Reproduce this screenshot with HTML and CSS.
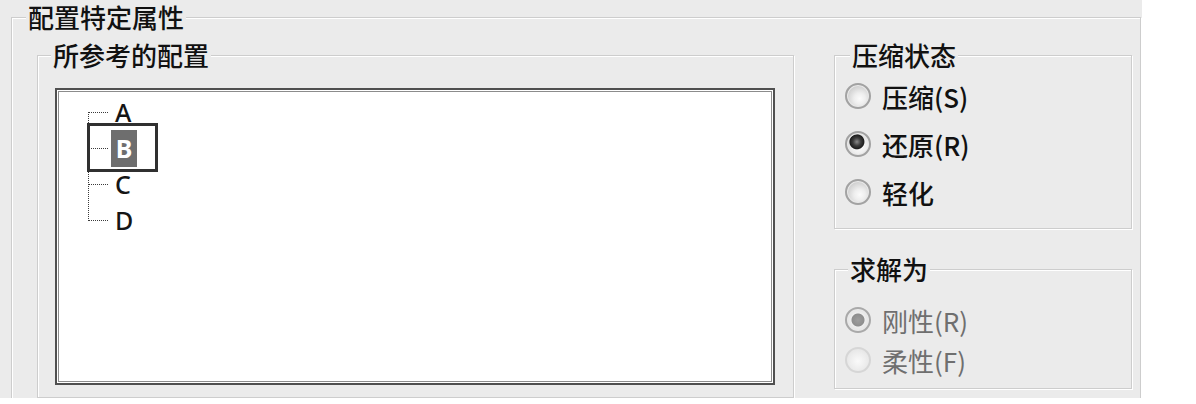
FILE: index.html
```html
<!DOCTYPE html>
<html lang="zh-CN">
<head>
<meta charset="utf-8">
<title>配置特定属性</title>
<link rel="stylesheet" href="styles.css">
</head>
<body>
<div class="window">
  <fieldset class="group outer">
    <legend class="title outer-title">配置特定属性</legend>
    <div class="outer-body">
      <fieldset class="group refs">
        <legend class="title refs-title">所参考的配置</legend>
        <div class="refs-body">
          <div class="listbox">
            <ul class="tree">
              <li class="node"><span class="branch"></span><span class="label">A</span></li>
              <li class="node selected"><span class="branch"></span><span class="label">B</span></li>
              <li class="node"><span class="branch"></span><span class="label">C</span></li>
              <li class="node"><span class="branch"></span><span class="label">D</span></li>
            </ul>
          </div>
        </div>
      </fieldset>
      <div class="side">
        <fieldset class="group state">
          <legend class="title state-title">压缩状态</legend>
          <div class="radios state-radios">
            <div class="radio"><span class="dot"></span><span>压缩(S)</span></div>
            <div class="radio"><span class="dot checked"></span><span>还原(R)</span></div>
            <div class="radio"><span class="dot"></span><span>轻化</span></div>
          </div>
        </fieldset>
        <fieldset class="group solve">
          <legend class="title solve-title">求解为</legend>
          <div class="radios solve-radios">
            <div class="radio disabled"><span class="dot checked"></span><span>刚性(R)</span></div>
            <div class="radio disabled"><span class="dot"></span><span>柔性(F)</span></div>
          </div>
        </fieldset>
      </div>
    </div>
  </fieldset>
</div>
</body>
</html>
```

FILE: styles.css
```css
*,
*::before,
*::after {
  box-sizing: border-box;
}

body {
  margin: 0;
  background: #ffffff;
  font-family: "Noto Sans CJK SC", "Noto Sans", sans-serif;
  color: #111111;
}

.window {
  width: 1142px;
  height: 398px;
  background: #ebebeb;
  overflow: hidden;
  padding-left: 11px;
  padding-top: 2px;
}

.group {
  margin: 0;
  padding: 0;
  min-width: 0;
  border: 1px solid #cdcdcd;
  box-shadow: 1px 1px 0 #ffffff, inset 1px 1px 0 #ffffff;
}

.title {
  font-size: 26px;
  line-height: 30px;
  font-weight: 500;
  padding: 0 2px;
  background: #ebebeb;
  color: #111111;
}

/* outer group */
.outer {
  width: 1130px;
  height: 430px;
}

.outer-title {
  margin-left: 14px;
}

.outer-body {
  display: flex;
  gap: 40px;
  padding: 8px 8px 0 25px;
}

/* referenced configurations */
.refs {
  width: 757px;
  height: 358px;
}

.refs-title {
  margin-left: 13px;
}

.refs-body {
  padding: 18px 0 0 17px;
}

.listbox {
  width: 720px;
  height: 297px;
  background: #ffffff;
  border: 2px solid #4f4f4f;
  box-shadow: inset 0 0 0 1px #ffffff, inset 0 0 0 2px #8c8c8c;
  padding-top: 4px;
}

.tree {
  position: relative;
  list-style: none;
  margin: 0;
  padding: 0 0 0 31px;
}

.tree::before {
  content: "";
  position: absolute;
  left: 31px;
  top: 18px;
  height: 109px;
  border-left: 1px dotted #3a3a3a;
}

.node {
  position: relative;
  display: flex;
  align-items: center;
  height: 36px;
}

.branch {
  width: 20px;
  height: 0;
  border-top: 1px dotted #3a3a3a;
  margin-right: 7px;
}

.label {
  font-family: "Noto Sans", "DejaVu Sans", sans-serif;
  font-size: 25px;
  line-height: 1;
  font-weight: 500;
  color: #151515;
}

.selected .branch {
  margin-right: 3px;
}

.selected .label {
  width: 26px;
  height: 37px;
  display: flex;
  align-items: center;
  justify-content: center;
  background: #6e6e6e;
  color: #ffffff;
  font-weight: 700;
}

.selected::before {
  content: "";
  position: absolute;
  left: -1px;
  top: -7px;
  width: 71px;
  height: 49px;
  border: 3px solid #303030;
}

/* side column */
.side {
  width: 298px;
  display: flex;
  flex-direction: column;
  gap: 25px;
}

.state {
  height: 189px;
}

.state-title {
  margin-left: 15px;
}

.solve {
  height: 135px;
}

.solve-title {
  margin-left: 13px;
}

.radios {
  display: flex;
  flex-direction: column;
  padding-left: 10px;
}

.state-radios {
  padding-top: 2px;
}

.solve-radios {
  padding-top: 16px;
}

.radio {
  display: flex;
  align-items: center;
  gap: 11px;
  height: 48px;
  font-size: 26px;
  font-weight: 500;
  color: #111111;
}

.solve-radios .radio {
  height: 40px;
}

.radio.disabled {
  color: #6f6f6f;
  font-weight: 400;
}

.dot {
  flex: none;
  width: 26px;
  height: 26px;
  border-radius: 50%;
  border: 2px solid #a2a2a2;
  background: radial-gradient(circle at 58% 62%, #fbfbfb 0, #eeeeee 30%, #cdcdcd 72%, #bdbdbd 100%);
  box-shadow: inset 0 0 0 1px #e9e9e9;
}

.dot.checked {
  background:
    radial-gradient(circle at 45% 40%, #8a8a8a 0, #3c3c3c 4px, #1e1e1e 7px, transparent 8px),
    radial-gradient(circle at 58% 62%, #fbfbfb 0, #eeeeee 40%, #cfcfcf 100%);
}

.disabled .dot {
  border-color: #b8b8b8;
  background: radial-gradient(circle at 58% 62%, #f6f6f6 0, #ececec 40%, #d9d9d9 100%);
}

.disabled .dot.checked {
  border-color: #a9a9a9;
  background:
    radial-gradient(circle, #9e9e9e 0, #8e8e8e 6px, transparent 7px),
    radial-gradient(circle, #ffffff 0, #e8e8e8 60%, #d4d4d4 100%);
}

.disabled .dot:not(.checked) {
  border-color: #d6d6d6;
  box-shadow: none;
  background: radial-gradient(circle at 50% 55%, #fafafa 0, #ededed 50%, #e0e0e0 100%);
}
```
